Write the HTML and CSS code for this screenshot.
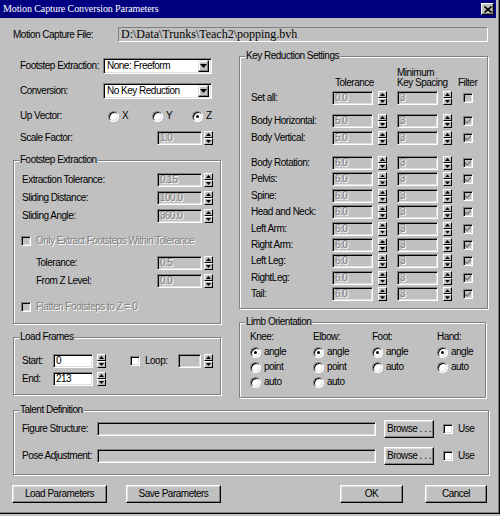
FILE: index.html
```html
<!DOCTYPE html>
<html>
<head>
<meta charset="utf-8">
<title>Motion Capture Conversion Parameters</title>
<link rel="stylesheet" href="styles.css">
</head>
<body>
<div class="window">
  <div class="titlebar">
    <span class="title">Motion Capture Conversion Parameters</span>
    <span class="close"><svg width="8" height="7" viewBox="0 0 8 7"><path d="M0.5 0.5L7.5 6.5M7.5 0.5L0.5 6.5" stroke="#000" stroke-width="1.6"/></svg></span>
  </div>
  <div class="content">
    <div class="file-row">
      <span class="file-label">Motion Capture File:</span>
      <div class="file-field">D:\Data\Trunks\Teach2\popping.bvh</div>
    </div>

    <div class="main">
      <div class="left">
        <div class="frow combo-row r1">
          <span class="lbl lw-combo">Footstep Extraction:</span>
          <div class="combo"><span class="ctext">None: Freeform</span><span class="drop"><svg width="7" height="4" viewBox="0 0 7 4"><path d="M0 0H7L3.5 4Z"/></svg></span></div>
        </div>
        <div class="frow combo-row r2">
          <span class="lbl lw-combo">Conversion:</span>
          <div class="combo"><span class="ctext">No Key Reduction</span><span class="drop"><svg width="7" height="4" viewBox="0 0 7 4"><path d="M0 0H7L3.5 4Z"/></svg></span></div>
        </div>
        <div class="frow upv">
          <span class="lbl lw-upv">Up Vector:</span>
          <span class="ropt ro-x"><span class="rb"></span>X</span>
          <span class="ropt ro-y"><span class="rb"></span>Y</span>
          <span class="ropt"><span class="rb on"></span>Z</span>
        </div>
        <div class="frow scale">
          <span class="lbl lw-scale">Scale Factor:</span>
          <span class="edit dis ew45">1.0</span>
          <span class="spin"><i class="up"></i><i class="dn"></i></span>
        </div>

        <div class="group footstep">
          <span class="legend">Footstep Extraction</span>
          <div class="frow fs-row">
            <span class="lbl lw-fs">Extraction Tolerance:</span>
            <span class="edit dis ew45">0.15</span>
            <span class="spin"><i class="up"></i><i class="dn"></i></span>
          </div>
          <div class="frow fs-row m4">
            <span class="lbl lw-fs">Sliding Distance:</span>
            <span class="edit dis ew45">100.0</span>
            <span class="spin"><i class="up"></i><i class="dn"></i></span>
          </div>
          <div class="frow fs-row m4">
            <span class="lbl lw-fs">Sliding Angle:</span>
            <span class="edit dis ew45">360.0</span>
            <span class="spin"><i class="up"></i><i class="dn"></i></span>
          </div>
          <div class="frow cb-row only">
            <span class="cb dis"></span><span class="dt">Only Extract Footsteps Within Tolerance</span>
          </div>
          <div class="frow fs-row sub tol">
            <span class="lbl lw-sub">Tolerance:</span>
            <span class="edit dis ew45">0.5</span>
            <span class="spin"><i class="up"></i><i class="dn"></i></span>
          </div>
          <div class="frow fs-row sub m4">
            <span class="lbl lw-sub">From Z Level:</span>
            <span class="edit dis ew45">0.0</span>
            <span class="spin"><i class="up"></i><i class="dn"></i></span>
          </div>
          <div class="frow cb-row flatten">
            <span class="cb dis"></span><span class="dt">Flatten Footsteps to Z = 0</span>
          </div>
        </div>

        <div class="group load">
          <span class="legend">Load Frames</span>
          <div class="frow lf-row">
            <span class="lbl lw-lf">Start:</span>
            <span class="edit ew40">0</span>
            <span class="spin sp4"><i class="up"></i><i class="dn"></i></span>
            <span class="cb loop-cb"></span><span class="loop-lbl">Loop:</span>
            <span class="edit dis ew23"></span>
            <span class="spin sp3"><i class="up"></i><i class="dn"></i></span>
          </div>
          <div class="frow lf-row m4">
            <span class="lbl lw-lf">End:</span>
            <span class="edit ew40">213</span>
            <span class="spin sp4"><i class="up"></i><i class="dn"></i></span>
          </div>
        </div>
      </div>

      <div class="right">
        <div class="group keyred">
          <span class="legend">Key Reduction Settings</span>
          <div class="khead">
            <div class="kh-a"><span class="h-min">Minimum</span></div>
            <div class="kh-b"><span class="h-tol">Tolerance</span><span class="h-ks">Key Spacing</span><span class="h-f">Filter</span></div>
          </div>
          <div class="krow setall"><span class="klbl">Set all:</span><span class="edit dis ew41">0.0</span><span class="spin"><i class="up"></i><i class="dn"></i></span><span class="edit dis ew41 e2">3</span><span class="spin"><i class="up"></i><i class="dn"></i></span><span class="cb dis kcb"></span></div>
          <div class="krow bh"><span class="klbl">Body Horizontal:</span><span class="edit dis ew41">5.0</span><span class="spin"><i class="up"></i><i class="dn"></i></span><span class="edit dis ew41 e2">3</span><span class="spin"><i class="up"></i><i class="dn"></i></span><span class="cb dis chk kcb"></span></div>
          <div class="krow bv"><span class="klbl">Body Vertical:</span><span class="edit dis ew41">5.0</span><span class="spin"><i class="up"></i><i class="dn"></i></span><span class="edit dis ew41 e2">3</span><span class="spin"><i class="up"></i><i class="dn"></i></span><span class="cb dis chk kcb"></span></div>
          <div class="krow br"><span class="klbl">Body Rotation:</span><span class="edit dis ew41">6.0</span><span class="spin"><i class="up"></i><i class="dn"></i></span><span class="edit dis ew41 e2">3</span><span class="spin"><i class="up"></i><i class="dn"></i></span><span class="cb dis chk kcb"></span></div>
          <div class="krow ks"><span class="klbl">Pelvis:</span><span class="edit dis ew41">6.0</span><span class="spin"><i class="up"></i><i class="dn"></i></span><span class="edit dis ew41 e2">3</span><span class="spin"><i class="up"></i><i class="dn"></i></span><span class="cb dis chk kcb"></span></div>
          <div class="krow ks"><span class="klbl">Spine:</span><span class="edit dis ew41">6.0</span><span class="spin"><i class="up"></i><i class="dn"></i></span><span class="edit dis ew41 e2">3</span><span class="spin"><i class="up"></i><i class="dn"></i></span><span class="cb dis chk kcb"></span></div>
          <div class="krow ks"><span class="klbl">Head and Neck:</span><span class="edit dis ew41">6.0</span><span class="spin"><i class="up"></i><i class="dn"></i></span><span class="edit dis ew41 e2">3</span><span class="spin"><i class="up"></i><i class="dn"></i></span><span class="cb dis chk kcb"></span></div>
          <div class="krow ks"><span class="klbl">Left Arm:</span><span class="edit dis ew41">6.0</span><span class="spin"><i class="up"></i><i class="dn"></i></span><span class="edit dis ew41 e2">3</span><span class="spin"><i class="up"></i><i class="dn"></i></span><span class="cb dis chk kcb"></span></div>
          <div class="krow ks"><span class="klbl">Right Arm:</span><span class="edit dis ew41">6.0</span><span class="spin"><i class="up"></i><i class="dn"></i></span><span class="edit dis ew41 e2">3</span><span class="spin"><i class="up"></i><i class="dn"></i></span><span class="cb dis chk kcb"></span></div>
          <div class="krow ks"><span class="klbl">Left Leg:</span><span class="edit dis ew41">6.0</span><span class="spin"><i class="up"></i><i class="dn"></i></span><span class="edit dis ew41 e2">3</span><span class="spin"><i class="up"></i><i class="dn"></i></span><span class="cb dis chk kcb"></span></div>
          <div class="krow ks"><span class="klbl">RightLeg:</span><span class="edit dis ew41">6.0</span><span class="spin"><i class="up"></i><i class="dn"></i></span><span class="edit dis ew41 e2">3</span><span class="spin"><i class="up"></i><i class="dn"></i></span><span class="cb dis chk kcb"></span></div>
          <div class="krow ks"><span class="klbl">Tail:</span><span class="edit dis ew41">6.0</span><span class="spin"><i class="up"></i><i class="dn"></i></span><span class="edit dis ew41 e2">3</span><span class="spin"><i class="up"></i><i class="dn"></i></span><span class="cb dis chk kcb"></span></div>
        </div>

        <div class="group limb">
          <span class="legend">Limb Orientation</span>
          <div class="limb-cols">
            <div class="lcol c1">
              <div class="lhead">Knee:</div>
              <div class="lopt first"><span class="rb on"></span>angle</div>
              <div class="lopt"><span class="rb"></span>point</div>
              <div class="lopt"><span class="rb"></span>auto</div>
            </div>
            <div class="lcol c2">
              <div class="lhead">Elbow:</div>
              <div class="lopt first"><span class="rb on"></span>angle</div>
              <div class="lopt"><span class="rb"></span>point</div>
              <div class="lopt"><span class="rb"></span>auto</div>
            </div>
            <div class="lcol c3">
              <div class="lhead">Foot:</div>
              <div class="lopt first"><span class="rb on"></span>angle</div>
              <div class="lopt"><span class="rb"></span>auto</div>
            </div>
            <div class="lcol c4">
              <div class="lhead">Hand:</div>
              <div class="lopt first"><span class="rb on"></span>angle</div>
              <div class="lopt"><span class="rb"></span>auto</div>
            </div>
          </div>
        </div>
      </div>
    </div>

    <div class="group talent">
      <span class="legend">Talent Definition</span>
      <div class="frow tr first">
        <span class="lbl lw-t">Figure Structure:</span>
        <span class="edit dis tfield"></span>
        <button class="btn browse">Browse . . .</button>
        <span class="cb use-cb"></span><span class="use-lbl">Use</span>
      </div>
      <div class="frow tr second">
        <span class="lbl lw-t">Pose Adjustment:</span>
        <span class="edit dis tfield"></span>
        <button class="btn browse">Browse . . .</button>
        <span class="cb use-cb"></span><span class="use-lbl">Use</span>
      </div>
    </div>

    <div class="buttons">
      <button class="btn b-load">Load Parameters</button>
      <button class="btn b-save">Save Parameters</button>
      <button class="btn b-ok">OK</button>
      <button class="btn b-cancel">Cancel</button>
    </div>
  </div>
</div>
</body>
</html>
```

FILE: styles.css
```css
* { box-sizing: border-box; }
html, body { margin: 0; padding: 0; background: #c0c0c0; }
body {
  font-family: "Liberation Sans", Arial, sans-serif;
  font-size: 10px;
  letter-spacing: -0.5px;
  line-height: 12px;
  color: #000;
}

.window {
  width: 500px;
  height: 514px;
  background: #c0c0c0;
  border-right: 1px solid #000;
  border-bottom: 1px solid #000;
  box-shadow: inset -1px -1px #808080;
  overflow: hidden;
}

/* title bar */
.titlebar {
  height: 18px;
  margin-right: 3px;
  background: #000080;
  display: flex;
  align-items: center;
  justify-content: space-between;
  padding: 0 2px 0 3px;
}
.title {
  color: #fff;
  font-family: "Liberation Serif", "Times New Roman", serif;
  font-size: 10px;
  letter-spacing: -0.1px;
}
.close {
  width: 13px;
  height: 12px;
  background: #c0c0c0;
  border: 1px solid;
  border-color: #fff #000 #000 #fff;
  box-shadow: inset -1px -1px #808080;
  display: flex;
  align-items: center;
  justify-content: center;
}

.content { padding-left: 12px; }

/* file row */
.file-row { display: flex; align-items: center; margin-top: 9px; height: 15px; }
.file-label { width: 106px; padding-left: 1px; }
.file-field {
  width: 370px;
  height: 15px;
  border: 1px solid;
  border-color: #808080 #fff #fff #808080;
  padding-left: 2px;
  font-family: "Liberation Serif", "Times New Roman", serif;
  font-size: 12px;
  letter-spacing: 0;
  line-height: 13px;
  white-space: nowrap;
}

.main { display: flex; margin-top: 8px; }
.left { width: 227px; }
.right { width: 249px; }

.frow { display: flex; align-items: center; height: 14px; }
.lbl { white-space: nowrap; flex: none; }
.m4 { margin-top: 4px; }

/* generic controls */
.edit {
  flex: none;
  height: 14px;
  border: 1px solid;
  border-color: #808080 #fff #fff #808080;
  box-shadow: inset 1px 1px #000, inset -1px -1px #dfdfdf;
  background: #fff;
  padding: 0 2px;
  line-height: 12px;
  white-space: nowrap;
  overflow: hidden;
}
.edit.dis { background: #c0c0c0; color: #808080; text-shadow: 1px 1px #fff; }
.ew45 { width: 45px; }
.ew41 { width: 41px; }
.ew40 { width: 40px; }
.ew23 { width: 23px; }

.spin {
  flex: none;
  width: 9px;
  height: 14px;
  margin-left: 2px;
  display: flex;
  flex-direction: column;
}
.spin i {
  flex: 1;
  background: #c0c0c0;
  border: 1px solid;
  border-color: #fff #000 #000 #fff;
  display: flex;
  align-items: center;
  justify-content: center;
}
.spin i::after {
  content: "";
  width: 5px;
  height: 3px;
  background: #000;
}
.spin i.up::after { clip-path: polygon(50% 0, 100% 100%, 0 100%); }
.spin i.dn::after { clip-path: polygon(0 0, 100% 0, 50% 100%); }

.cb {
  flex: none;
  position: relative;
  width: 10px;
  height: 10px;
  border: 1px solid;
  border-color: #808080 #fff #fff #808080;
  box-shadow: inset 1px 1px #000, inset -1px -1px #dfdfdf;
  background: #fff;
}
.cb.dis { background: #c0c0c0; }
.cb.chk::after {
  content: "";
  position: absolute;
  left: 1px;
  top: 1px;
  width: 6px;
  height: 6px;
  background: #808080;
  clip-path: polygon(0 35%, 35% 65%, 100% 0, 100% 35%, 35% 100%, 0 70%);
}

.rb {
  flex: none;
  position: relative;
  width: 11px;
  height: 11px;
  border-radius: 50%;
  border: 1px solid;
  border-color: #808080 #fff #fff #808080;
  box-shadow: inset 1px 1px #000, inset -1px -1px #dfdfdf;
  background: #fff;
  margin-right: 3px;
}
.rb.on::after {
  content: "";
  position: absolute;
  left: 3px;
  top: 3px;
  width: 3px;
  height: 3px;
  border-radius: 50%;
  background: #000;
}

.dt { color: #808080; text-shadow: 1px 1px #fff; white-space: nowrap; }

.btn {
  flex: none;
  height: 18px;
  padding: 0;
  margin: 0;
  font: inherit;
  letter-spacing: inherit;
  color: #000;
  background: #c0c0c0;
  border: 1px solid;
  border-color: #fff #000 #000 #fff;
  box-shadow: inset -1px -1px #808080, inset 1px 1px #dfdfdf;
  display: flex;
  align-items: center;
  justify-content: center;
  white-space: nowrap;
}

/* combo */
.combo-row { height: 16px; padding-left: 8px; }
.r1 { margin-top: 8px; }
.r2 { margin-top: 9px; }
.lw-combo { width: 83px; }
.combo {
  width: 109px;
  height: 16px;
  display: flex;
  align-items: center;
  background: #fff;
  border: 1px solid;
  border-color: #808080 #fff #fff #808080;
  box-shadow: inset 1px 1px #000, inset -1px -1px #dfdfdf;
  padding: 2px 2px 2px 2px;
}
.ctext { flex: 1; white-space: nowrap; padding-left: 1px; }
.drop {
  width: 11px;
  height: 12px;
  background: #c0c0c0;
  border: 1px solid;
  border-color: #dfdfdf #000 #000 #dfdfdf;
  box-shadow: inset -1px -1px #808080, inset 1px 1px #fff;
  display: flex;
  align-items: center;
  justify-content: center;
}

.upv { margin-top: 10px; padding-left: 8px; }
.lw-upv { width: 88px; }
.ropt { display: flex; align-items: center; flex: none; }
.ro-x { width: 44px; }
.ro-y { width: 40px; }

.scale { margin-top: 8px; padding-left: 8px; }
.lw-scale { width: 137px; }

/* group boxes */
.group {
  position: relative;
  border: 1px solid #808080;
  box-shadow: inset 1px 1px #fff, 1px 1px #fff;
}
.legend {
  position: absolute;
  left: 5px;
  top: -7px;
  padding: 0 1px;
  background: #c0c0c0;
  line-height: 12px;
  white-space: nowrap;
}

.footstep {
  margin-top: 15px;
  margin-left: 1px;
  width: 208px;
  height: 164px;
  padding: 12px 0 0 8px;
}
.lw-fs { width: 135px; }
.lw-sub { width: 121px; }
.fs-row.sub { padding-left: 14px; }
.cb-row .cb { margin-left: -1px; margin-right: 5px; }
.only { margin-top: 11px; }
.tol { margin-top: 8px; }
.flatten { margin-top: 12px; }

.load {
  margin-top: 13px;
  margin-left: 1px;
  width: 208px;
  height: 58px;
  padding: 16px 0 0 8px;
}
.lw-lf { width: 31px; }
.sp4 { margin-left: 4px; }
.loop-cb { margin-left: 24px; }
.loop-lbl { margin-left: 5px; width: 33px; }
.sp3 { margin-left: 3px; }

/* key reduction */
.keyred {
  margin-top: 6px;
  width: 249px;
  height: 253px;
  padding: 11px 0 0 11px;
}
.khead { line-height: 10px; }
.kh-a, .kh-b { display: flex; height: 10px; white-space: nowrap; }
.h-min { margin-left: 146px; }
.h-tol { margin-left: 84px; width: 62px; }
.h-ks { width: 61px; }
.krow { display: flex; align-items: center; height: 14px; }
.klbl { width: 81px; white-space: nowrap; flex: none; }
.krow .spin { margin-left: 5px; }
.krow .e2 { margin-left: 10px; }
.krow .kcb { margin-left: 11px; }
.setall { margin-top: 3px; }
.bh { margin-top: 9px; }
.bv { margin-top: 3px; }
.br { margin-top: 11px; }
.ks { margin-top: 2.4px; }

/* limb */
.limb {
  margin-top: 13px;
  width: 247px;
  height: 76px;
  padding: 9px 0 0 10px;
}
.limb-cols { display: flex; }
.lcol { flex: none; }
.c1 { width: 63px; }
.c2 { width: 59px; }
.c3 { width: 65px; }
.lhead { height: 10px; line-height: 10px; }
.lopt { display: flex; align-items: center; height: 14px; margin-top: 1px; }
.lopt.first { margin-top: 3px; }

/* talent */
.talent {
  margin-top: 12px;
  margin-left: 1px;
  width: 476px;
  height: 65px;
  padding: 9px 0 0 8px;
}
.tr { height: 18px; }
.tr.second { margin-top: 9px; }
.lw-t { width: 75px; }
.tfield { width: 279px; }
.browse { width: 50px; margin-left: 8px; }
.use-cb { margin-left: 9px; }
.use-lbl { margin-left: 5px; }

/* bottom buttons */
.buttons { display: flex; margin-top: 10px; }
.b-load { width: 95px; }
.b-save { width: 95px; margin-left: 19px; }
.b-ok { width: 63px; margin-left: 119px; }
.b-cancel { width: 62px; margin-left: 22px; }
```
